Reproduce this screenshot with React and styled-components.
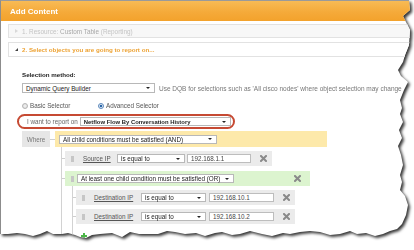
import React from "react";
import styled, { createGlobalStyle } from "styled-components";

const GlobalStyle = createGlobalStyle`
  body {
    margin: 0;
    background: #ffffff;
  }
`;

const TORN_EDGE = `polygon(
  0 0, 409px 0, 410px 10px, 403px 16px, 406px 22px, 410px 30px, 409px 45px,
  405px 55px, 403px 62px, 398px 70px, 401px 76px, 408px 82px, 404px 90px,
  400px 100px, 402px 108px, 400px 114px, 403px 122px, 399px 130px, 402px 138px,
  398px 146px, 401px 155px, 403px 165px, 400px 175px, 402px 182px, 400px 190px,
  405px 196px, 408px 205px, 406px 215px, 402px 224px, 397px 229px,
  390px 231px, 383px 234px, 375px 236px, 366px 233px, 357px 234px, 350px 231px,
  340px 234px, 330px 235px, 320px 232px, 310px 231px, 300px 232px, 290px 234px,
  283px 233px, 272px 236px, 262px 234px, 250px 231px, 240px 234px, 232px 235px,
  222px 232px, 215px 233px, 205px 236px, 196px 233px, 185px 234px, 175px 232px,
  167px 231px, 158px 234px, 148px 234px, 139px 234px, 130px 232px, 122px 237px,
  112px 233px, 100px 234px, 92px 235px, 86px 238px, 80px 237px, 75px 235px,
  68px 233px, 62px 234px, 53px 234px, 47px 231px, 40px 234px, 33px 236px,
  25px 234px, 17px 233px, 8px 234px, 0 234px
)`;

const Shadow = styled.div`
  width: 414px;
  height: 250px;
  filter: drop-shadow(2px 2px 1.5px rgba(0, 0, 0, 0.8));
`;

const Panel = styled.div`
  box-sizing: border-box;
  width: 414px;
  height: 250px;
  background: #ffffff;
  border-left: 1px solid #8c8c8c;
  border-top: 1px solid #9a9a9a;
  clip-path: ${TORN_EDGE};
  display: flex;
  flex-direction: column;
  font-family: "Liberation Sans", Arial, sans-serif;
  font-size: 6.3px;
  color: #333;
  overflow: hidden;
`;

const Header = styled.div`
  height: 20px;
  display: flex;
  align-items: center;
  padding-left: 9px;
  background: linear-gradient(#f8bb55, #f5aa3a 55%, #f3a22c);
  color: #fff;
  font-size: 8px;
  font-weight: bold;
`;

const Steps = styled.div`
  display: flex;
  flex-direction: column;
  gap: 4px;
  padding: 3px 0 0 7px;
`;

const Step = styled.div`
  height: ${p => (p.active ? 13 : 12)}px;
  display: flex;
  align-items: center;
  gap: 4px;
  padding-left: 6px;
  border: 1px solid #e2e2e2;
  background: ${p => (p.active ? "#ffffff" : "#f7f7f7")};
  color: ${p => (p.active ? "#eda233" : "#c4c4c4")};
  font-weight: ${p => (p.active ? "bold" : "normal")};
  font-size: ${p => (p.active ? "6.2px" : "6.4px")};
`;

const StepArrow = styled.span`
  width: 0;
  height: 0;
  border-style: solid;
  ${p =>
    p.open
      ? "border-width: 0 0 3px 3px; border-color: transparent transparent #444 transparent;"
      : "border-width: 2px 0 2px 3px; border-color: transparent transparent transparent #d8d8d8;"}
`;

const Muted = styled.span`
  color: #a8a8a8;
`;

const Body = styled.div`
  display: flex;
  flex-direction: column;
  align-items: flex-start;
  padding-left: 21px;
`;

const FieldLabel = styled.div`
  margin-top: 14px;
  line-height: 8px;
  font-weight: bold;
  font-size: 6.2px;
  color: #222;
`;

const Line = styled.div`
  display: flex;
  align-items: center;
  gap: ${p => p.gap || 0}px;
  margin-top: ${p => p.top || 0}px;
`;

const Hint = styled.span`
  color: #777;
  font-size: 6.5px;
  white-space: nowrap;
`;

const Select = styled.div`
  box-sizing: border-box;
  position: relative;
  width: ${p => p.w}px;
  height: ${p => p.h || 9}px;
  flex: none;
  display: flex;
  align-items: center;
  padding-left: 3px;
  background: #fff;
  border: 1px solid #b8b8b8;
  color: #222;
  white-space: nowrap;
  font-weight: ${p => (p.bold ? "bold" : "normal")};
  font-size: ${p => (p.bold ? "5.9px" : "inherit")};

  &::after {
    content: "";
    position: absolute;
    right: 4px;
    top: 50%;
    margin-top: -1px;
    border-left: 2px solid transparent;
    border-right: 2px solid transparent;
    border-top: 2.5px solid #222;
  }
`;

const Input = styled.div`
  box-sizing: border-box;
  width: ${p => p.w}px;
  height: 9px;
  flex: none;
  display: flex;
  align-items: center;
  padding-left: 3px;
  background: #fff;
  border: 1px solid #bdbdbd;
  color: #444;
`;

const Radio = styled.span`
  box-sizing: border-box;
  width: 6px;
  height: 6px;
  border-radius: 50%;
  border: 1px solid ${p => (p.checked ? "#5b88bb" : "#b4b4b4")};
  background: ${p =>
    p.checked
      ? "radial-gradient(circle, #2a66a8 0 1.4px, #e9f0f8 1.6px)"
      : "radial-gradient(circle, #f4f4f4, #d8d8d8)"};
`;

const RadioOption = styled.label`
  display: flex;
  align-items: center;
  gap: 2px;
  width: ${p => p.w}px;
  color: #555;
`;

const Oval = styled.div`
  box-sizing: border-box;
  margin: 5px 0 0 -5px;
  width: 218px;
  height: 15px;
  display: flex;
  align-items: center;
  gap: 2px;
  padding-left: 8px;
  border: 2px solid #c64a33;
  border-radius: 8px;
  color: #666;
`;

const WhereRow = styled.div`
  display: flex;
  align-items: center;
  margin-top: 2px;
  height: 16px;
`;

const WhereTag = styled.div`
  width: 28px;
  height: 16px;
  display: flex;
  align-items: center;
  justify-content: center;
  background: #e6e6e6;
  color: #777;
`;

const Connector = styled.span`
  width: ${p => p.w}px;
  height: 1px;
  flex: none;
  background: #cfcfcf;
`;

const GroupBox = styled.div`
  box-sizing: border-box;
  width: ${p => p.w}px;
  height: ${p => p.h}px;
  display: flex;
  align-items: center;
  padding: 0 5px 0 ${p => p.pad}px;
  background: ${p => p.bg};
`;

const Branch = styled.div`
  display: flex;
  flex-direction: column;
  align-items: flex-start;
  gap: ${p => p.gap}px;
  margin-left: ${p => p.left}px;
  padding: 4px 0 4px;
  border-left: 1px solid #d2d2d2;
`;

const Leaf = styled.div`
  display: flex;
  align-items: ${p => (p.top ? "flex-start" : "center")};

  & > ${Connector} {
    margin-top: ${p => (p.top ? 7 : 0)}px;
  }
`;

const Stack = styled.div`
  display: flex;
  flex-direction: column;
  align-items: flex-start;
`;

const Grip = styled.span`
  width: 3px;
  height: 6px;
  flex: none;
  margin-right: ${p => p.gap || 0}px;
  background-image: radial-gradient(circle, #c6c6c6 0.8px, transparent 1px);
  background-size: 2px 2px;
`;

const FieldName = styled.span`
  width: ${p => p.w}px;
  flex: none;
  color: #555;
  text-decoration: underline;
  white-space: nowrap;
`;

const Remove = styled.svg`
  width: 7px;
  height: 7px;
  flex: none;
  margin-left: ${p => p.left || 0}px;
`;

const AddIcon = styled.svg`
  width: 6px;
  height: 6px;
  margin: 5px 0 0 8px;
`;

function RemoveIcon({ left, style }) {
  return (
    <Remove left={left} style={style} viewBox="0 0 7 7">
      <path d="M1 1L6 6M6 1L1 6" stroke="#8a8a8a" strokeWidth="2" strokeLinecap="square" />
    </Remove>
  );
}

function Condition({ field, fieldWidth, value, width, selectWidth, inputWidth, gap }) {
  return (
    <GroupBox w={width} h={15} pad={6} bg="#ebebeb">
      <Grip gap={9} />
      <FieldName w={fieldWidth}>{field}</FieldName>
      <Select w={selectWidth}>is equal to</Select>
      <span style={{ width: gap }} />
      <Input w={inputWidth}>{value}</Input>
      <RemoveIcon left={9} />
    </GroupBox>
  );
}

function App() {
  return (
    <>
      <GlobalStyle />
      <Shadow>
        <Panel>
          <Header>Add Content</Header>

          <Steps>
            <Step>
              <StepArrow />
              <span>
                1. Resource: <Muted>Custom Table</Muted> (Reporting)
              </span>
            </Step>
            <Step active>
              <StepArrow open />
              <span>2. Select objects you are going to report on...</span>
            </Step>
          </Steps>

          <Body>
            <FieldLabel>Selection method:</FieldLabel>
            <Line top={4} gap={4}>
              <Select w={133} h={10}>Dynamic Query Builder</Select>
              <Hint>Use DQB for selections such as 'All cisco nodes' where object selection may change</Hint>
            </Line>

            <Line top={9}>
              <RadioOption w={76}>
                <Radio />
                Basic Selector
              </RadioOption>
              <RadioOption w={80}>
                <Radio checked />
                Advanced Selector
              </RadioOption>
            </Line>

            <Oval>
              <span>I want to report on</span>
              <Select w={151} bold>Netflow Flow By Conversation History</Select>
            </Oval>

            <WhereRow>
              <WhereTag>Where</WhereTag>
              <Connector w={5} />
              <GroupBox w={272} h={16} pad={4} bg="#fde9aa">
                <Select w={158}>All child conditions must be satisfied (AND)</Select>
              </GroupBox>
            </WhereRow>

            <Branch left={39} gap={5}>
              <Leaf>
                <Connector w={3} />
                <Condition
                  field="Source IP"
                  fieldWidth={34}
                  value="192.168.1.1"
                  width={207}
                  selectWidth={68}
                  inputWidth={64}
                  gap={3}
                />
              </Leaf>
              <Leaf top>
                <Connector w={3} />
                <Stack>
                  <GroupBox w={245} h={15} pad={6} bg="#dcf4cf">
                    <Grip gap={3} />
                    <Select w={157}>At least one child condition must be satisfied (OR)</Select>
                    <RemoveIcon style={{ marginLeft: "auto", marginRight: 4 }} />
                  </GroupBox>
                  <Branch left={7} gap={4}>
                    <Leaf>
                      <Connector w={3} />
                      <Condition
                        field="Destination IP"
                        fieldWidth={47}
                        value="192.168.10.1"
                        width={219}
                        selectWidth={65}
                        inputWidth={65}
                        gap={5}
                      />
                    </Leaf>
                    <Leaf>
                      <Connector w={3} />
                      <Condition
                        field="Destination IP"
                        fieldWidth={47}
                        value="192.168.10.2"
                        width={219}
                        selectWidth={65}
                        inputWidth={65}
                        gap={5}
                      />
                    </Leaf>
                    <AddIcon viewBox="0 0 6 6">
                      <path d="M3 0V6M0 3H6" stroke="#4cb648" strokeWidth="2" />
                    </AddIcon>
                  </Branch>
                </Stack>
              </Leaf>
            </Branch>
          </Body>
        </Panel>
      </Shadow>
    </>
  );
}

export default App;
